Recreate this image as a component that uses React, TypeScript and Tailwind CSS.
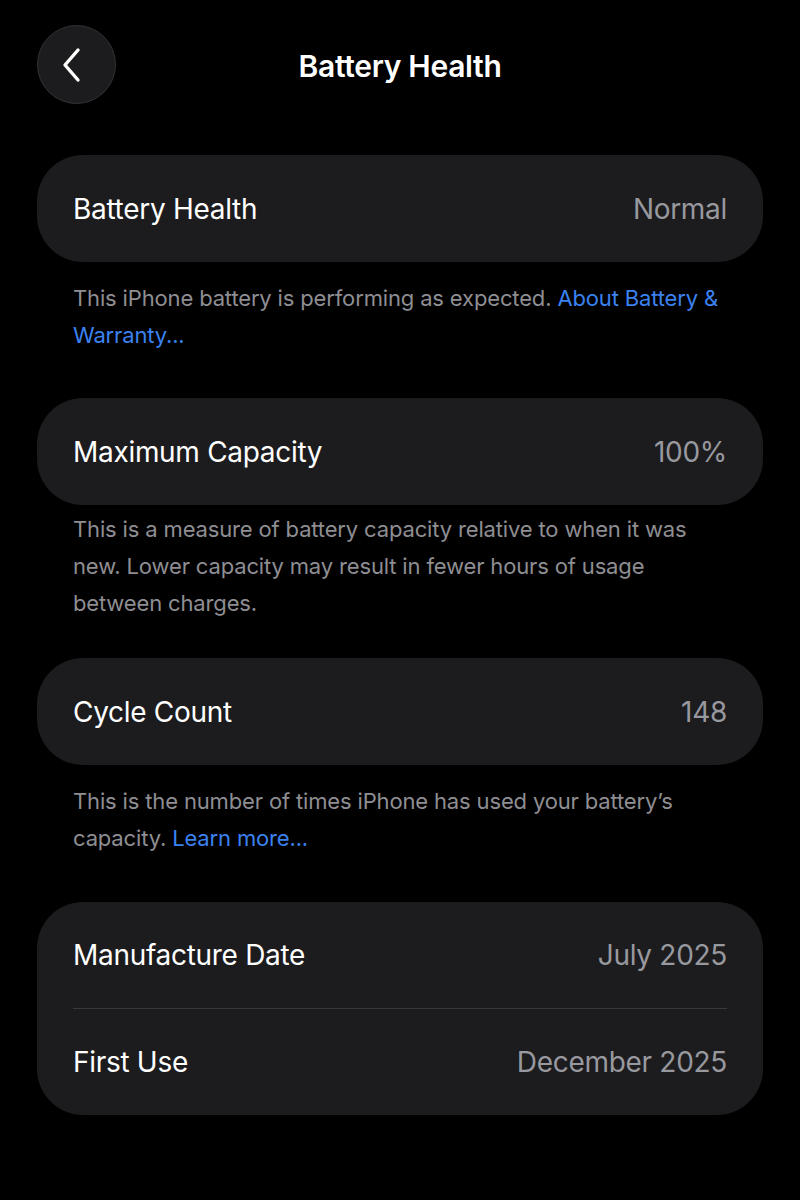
import React from "react";

const font = { fontFamily: "Inter, 'Noto Sans', sans-serif" };

function Row({ label, value, h = "h-[107px]" }: { label: string; value: string; h?: string }) {
  return (
    <div className={`flex ${h} items-center justify-between px-[36px]`}>
      <span className="text-[28px] text-white tracking-[-0.3px]">{label}</span>
      <span className="text-[28px] text-[#98989f] tracking-[-0.3px]">{value}</span>
    </div>
  );
}

function Card({ children }: { children: React.ReactNode }) {
  return <div className="rounded-[46px] bg-[#1c1c1e] mx-[37px]">{children}</div>;
}

function Footer({ children, mt }: { children: React.ReactNode; mt: string }) {
  return (
    <p className={`mx-[73px] ${mt} text-[22px] leading-[37px] text-[#8e8e93] tracking-[-0.15px]`}>
      {children}
    </p>
  );
}

export default function App() {
  return (
    <div className="min-h-[1200px] w-[800px] bg-black" style={font}>
      <div className="relative flex h-[130px] items-start justify-center">
        <button className="absolute left-[37px] top-[25px] flex h-[79px] w-[79px] items-center justify-center rounded-full border border-[#333336] bg-[#1c1c1e]">
          <svg width="30" height="36" viewBox="0 0 30 36" className="-ml-[6px]">
            <path d="M19 3 L6 18 L19 33" fill="none" stroke="white" strokeWidth="3.4" strokeLinecap="round" strokeLinejoin="round" />
          </svg>
        </button>
        <h1 className="mt-[44px] text-[30px] leading-[45px] font-semibold text-white tracking-[-0.3px]">Battery Health</h1>
      </div>

      <div className="mt-[25px]">
        <Card>
          <Row label="Battery Health" value="Normal" />
        </Card>
        <Footer mt="mt-[18px]">
          This iPhone battery is performing as expected.{" "}
          <span className="text-[#3b82f0]">About Battery &amp; Warranty...</span>
        </Footer>
      </div>

      <div className="mt-[44px]">
        <Card>
          <Row label="Maximum Capacity" value="100%" />
        </Card>
        <Footer mt="mt-[6px]">
          This is a measure of battery capacity relative to when it was new. Lower capacity may result in fewer hours of usage between charges.
        </Footer>
      </div>

      <div className="mt-[36px]">
        <Card>
          <Row label="Cycle Count" value="148" />
        </Card>
        <Footer mt="mt-[18px]">
          This is the number of times iPhone has used your battery’s capacity.{" "}
          <span className="text-[#3b82f0]">Learn more...</span>
        </Footer>
      </div>

      <div className="mt-[45px]">
        <Card>
          <Row label="Manufacture Date" value="July 2025" h="h-[106px]" />
          <div className="mx-[36px] h-px bg-[#38383a]" />
          <Row label="First Use" value="December 2025" h="h-[106px]" />
        </Card>
      </div>
    </div>
  );
}
